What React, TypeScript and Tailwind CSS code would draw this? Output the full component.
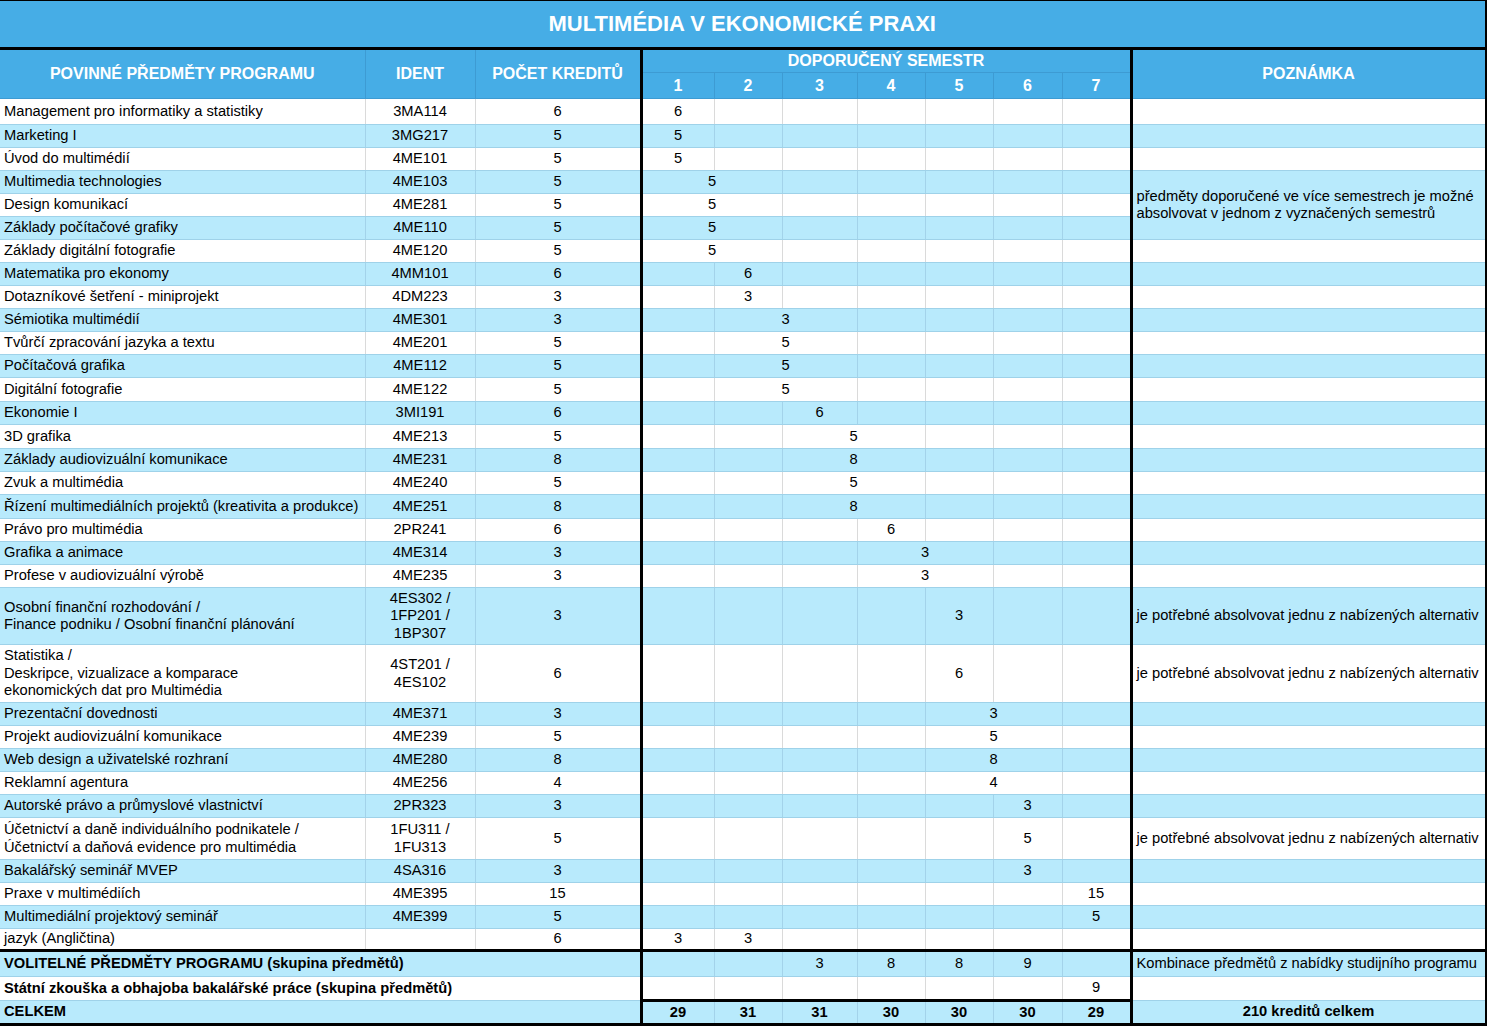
import React from "react";

type Sem = [number, number, string];
type Row = {
  name: string | string[];
  id: string | string[];
  cr: string;
  sem: Sem[];
  h: string;
  note?: string;
};

const ALT = "je potřebné absolvovat jednu z nabízených alternativ";

const rows: Row[] = [
  { name: "Management pro informatiky a statistiky", id: "3MA114", cr: "6", sem: [[1, 1, "6"]], h: "h-[26px]" },
  { name: "Marketing I", id: "3MG217", cr: "5", sem: [[1, 1, "5"]], h: "h-[23px]" },
  { name: "Úvod do multimédií", id: "4ME101", cr: "5", sem: [[1, 1, "5"]], h: "h-[23px]" },
  { name: "Multimedia technologies", id: "4ME103", cr: "5", sem: [[1, 2, "5"]], h: "h-[23px]", note: "SPAN" },
  { name: "Design komunikací", id: "4ME281", cr: "5", sem: [[1, 2, "5"]], h: "h-[23px]", note: "SKIP" },
  { name: "Základy počítačové grafiky", id: "4ME110", cr: "5", sem: [[1, 2, "5"]], h: "h-[23px]", note: "SKIP" },
  { name: "Základy digitální fotografie", id: "4ME120", cr: "5", sem: [[1, 2, "5"]], h: "h-[23px]" },
  { name: "Matematika pro ekonomy", id: "4MM101", cr: "6", sem: [[2, 1, "6"]], h: "h-[23px]" },
  { name: "Dotazníkové šetření - miniprojekt", id: "4DM223", cr: "3", sem: [[2, 1, "3"]], h: "h-[23px]" },
  { name: "Sémiotika multimédií", id: "4ME301", cr: "3", sem: [[2, 2, "3"]], h: "h-[23px]" },
  { name: "Tvůrčí zpracování jazyka a textu", id: "4ME201", cr: "5", sem: [[2, 2, "5"]], h: "h-[23px]" },
  { name: "Počítačová grafika", id: "4ME112", cr: "5", sem: [[2, 2, "5"]], h: "h-[23px]" },
  { name: "Digitální fotografie", id: "4ME122", cr: "5", sem: [[2, 2, "5"]], h: "h-[24px]" },
  { name: "Ekonomie I", id: "3MI191", cr: "6", sem: [[3, 1, "6"]], h: "h-[23px]" },
  { name: "3D grafika", id: "4ME213", cr: "5", sem: [[3, 2, "5"]], h: "h-[24px]" },
  { name: "Základy audiovizuální komunikace", id: "4ME231", cr: "8", sem: [[3, 2, "8"]], h: "h-[23px]" },
  { name: "Zvuk a multimédia", id: "4ME240", cr: "5", sem: [[3, 2, "5"]], h: "h-[23px]" },
  { name: "Řízení multimediálních projektů (kreativita a produkce)", id: "4ME251", cr: "8", sem: [[3, 2, "8"]], h: "h-[24px]" },
  { name: "Právo pro multimédia", id: "2PR241", cr: "6", sem: [[4, 1, "6"]], h: "h-[23px]" },
  { name: "Grafika a animace", id: "4ME314", cr: "3", sem: [[4, 2, "3"]], h: "h-[23px]" },
  { name: "Profese v audiovizuální výrobě", id: "4ME235", cr: "3", sem: [[4, 2, "3"]], h: "h-[23px]" },
  {
    name: ["Osobní finanční rozhodování /", "Finance podniku / Osobní finanční plánování"],
    id: ["4ES302 /", "1FP201 /", "1BP307"],
    cr: "3",
    sem: [[5, 1, "3"]],
    h: "h-[57px]",
    note: ALT,
  },
  {
    name: ["Statistika /", "Deskripce, vizualizace a komparace", "ekonomických dat pro Multimédia"],
    id: ["4ST201 /", "4ES102"],
    cr: "6",
    sem: [[5, 1, "6"]],
    h: "h-[58px]",
    note: ALT,
  },
  { name: "Prezentační dovednosti", id: "4ME371", cr: "3", sem: [[5, 2, "3"]], h: "h-[23px]" },
  { name: "Projekt audiovizuální komunikace", id: "4ME239", cr: "5", sem: [[5, 2, "5"]], h: "h-[23px]" },
  { name: "Web design a uživatelské rozhraní", id: "4ME280", cr: "8", sem: [[5, 2, "8"]], h: "h-[23px]" },
  { name: "Reklamní agentura", id: "4ME256", cr: "4", sem: [[5, 2, "4"]], h: "h-[23px]" },
  { name: "Autorské právo a průmyslové vlastnictví", id: "2PR323", cr: "3", sem: [[6, 1, "3"]], h: "h-[23px]" },
  {
    name: ["Účetnictví a daně individuálního podnikatele /", "Účetnictví a daňová evidence pro multimédia"],
    id: ["1FU311 /", "1FU313"],
    cr: "5",
    sem: [[6, 1, "5"]],
    h: "h-[42px]",
    note: ALT,
  },
  { name: "Bakalářský seminář MVEP", id: "4SA316", cr: "3", sem: [[6, 1, "3"]], h: "h-[23px]" },
  { name: "Praxe v multimédiích", id: "4ME395", cr: "15", sem: [[7, 1, "15"]], h: "h-[23px]" },
  { name: "Multimediální projektový seminář", id: "4ME399", cr: "5", sem: [[7, 1, "5"]], h: "h-[23px]" },
  { name: "jazyk (Angličtina)", id: "", cr: "6", sem: [[1, 1, "3"], [2, 1, "3"]], h: "h-[22px]" },
];

const R_THICK = "border-r-[3px] border-r-black";
const R_WHITE = "border-r border-r-[#dadada]";
const R_BLUE = "border-r border-r-[#a3d3ea]";
const R_HEAD = "border-r border-r-[#3d9bd3]";
const B_LINE = "border-b border-b-[#9fd2e9]";
const B_THICK = "border-b-[3px] border-b-black";
const B_HEAD = "border-b border-b-[#3d9bd3]";
const BLUE_BG = "bg-[#b8eafc]";

function Lines({ v }: { v: string | string[] }) {
  if (Array.isArray(v)) {
    return (
      <>
        {v.map((l, i) => (
          <div key={i}>{l}</div>
        ))}
      </>
    );
  }
  return <>{v}</>;
}

function semCells(sem: Sem[], blue: boolean, bottom: string, bold = false) {
  const out: React.ReactNode[] = [];
  let c = 1;
  while (c <= 7) {
    const s = sem.find((x) => x[0] === c);
    const span = s ? s[1] : 1;
    const end = c + span - 1;
    const right = end === 7 ? R_THICK : blue ? R_BLUE : R_WHITE;
    out.push(
      <td
        key={c}
        colSpan={span}
        className={`${right} ${bottom} p-0 text-center align-middle ${bold ? "font-bold" : ""}`}
      >
        {s ? s[2] : ""}
      </td>
    );
    c += span;
  }
  return out;
}

export default function App() {
  return (
    <div className="bg-white text-black font-['Liberation_Sans',Arial,sans-serif] text-[14.7px] leading-[17.5px]">
      <table className="table-fixed border-collapse w-[1486px] whitespace-nowrap">
        <colgroup>
          <col className="w-[365px]" />
          <col className="w-[110px]" />
          <col className="w-[166px]" />
          <col className="w-[73px]" />
          <col className="w-[68px]" />
          <col className="w-[75px]" />
          <col className="w-[68px]" />
          <col className="w-[68px]" />
          <col className="w-[69px]" />
          <col className="w-[69px]" />
          <col className="w-[355px]" />
        </colgroup>
        <tbody>
          <tr className="h-[48px]">
            <td
              colSpan={11}
              className={`bg-[#46ade6] text-white font-bold text-[22px] text-center align-middle p-0 border-t border-t-black ${B_THICK} ${R_THICK}`}
            >
              MULTIMÉDIA V EKONOMICKÉ PRAXI
            </td>
          </tr>
          <tr className="h-[24px] bg-[#46ade6] text-white font-bold text-[16px]">
            <td rowSpan={2} className={`${R_HEAD} ${B_HEAD} p-0 text-center align-middle`}>
              POVINNÉ PŘEDMĚTY PROGRAMU
            </td>
            <td rowSpan={2} className={`${R_HEAD} ${B_HEAD} p-0 text-center align-middle`}>
              IDENT
            </td>
            <td rowSpan={2} className={`${R_THICK} ${B_HEAD} p-0 text-center align-middle`}>
              POČET KREDITŮ
            </td>
            <td colSpan={7} className={`${R_THICK} ${B_HEAD} p-0 text-center align-middle`}>
              DOPORUČENÝ SEMESTR
            </td>
            <td rowSpan={2} className={`${R_THICK} ${B_HEAD} p-0 text-center align-middle`}>
              POZNÁMKA
            </td>
          </tr>
          <tr className="h-[26px] bg-[#46ade6] text-white font-bold text-[16px]">
            {[1, 2, 3, 4, 5, 6, 7].map((n) => (
              <td key={n} className={`${n === 7 ? R_THICK : R_HEAD} ${B_HEAD} p-0 text-center align-middle`}>
                {n}
              </td>
            ))}
          </tr>
          {rows.map((r, i) => {
            const blue = i % 2 === 1;
            const last = i === rows.length - 1;
            const bottom = last ? B_THICK : B_LINE;
            const rr = blue ? R_BLUE : R_WHITE;
            return (
              <tr key={i} className={`${r.h} ${blue ? BLUE_BG : "bg-white"}`}>
                <td className={`${rr} ${bottom} py-0 pl-[4px] pr-0 text-left align-middle`}>
                  <Lines v={r.name} />
                </td>
                <td className={`${rr} ${bottom} p-0 text-center align-middle`}>
                  <Lines v={r.id} />
                </td>
                <td className={`${R_THICK} ${bottom} p-0 text-center align-middle`}>{r.cr}</td>
                {semCells(r.sem, blue, bottom)}
                {r.note === "SKIP" ? null : r.note === "SPAN" ? (
                  <td
                    rowSpan={3}
                    className={`${R_THICK} ${B_LINE} ${BLUE_BG} py-0 pl-[4px] pr-0 text-left align-middle`}
                  >
                    předměty doporučené ve více semestrech je možné
                    <br />
                    absolvovat v jednom z vyznačených semestrů
                  </td>
                ) : (
                  <td className={`${R_THICK} ${bottom} py-0 pl-[4px] pr-0 text-left align-middle`}>
                    {r.note ?? ""}
                  </td>
                )}
              </tr>
            );
          })}
          <tr className={`h-[26px] ${BLUE_BG}`}>
            <td colSpan={3} className={`${R_THICK} ${B_LINE} py-0 pl-[4px] pr-0 text-left align-middle font-bold`}>
              VOLITELNÉ PŘEDMĚTY PROGRAMU (skupina předmětů)
            </td>
            {semCells(
              [
                [3, 1, "3"],
                [4, 1, "8"],
                [5, 1, "8"],
                [6, 1, "9"],
              ],
              true,
              B_LINE
            )}
            <td className={`${R_THICK} ${B_LINE} py-0 pl-[4px] pr-0 text-left align-middle`}>
              Kombinace předmětů z nabídky studijního programu
            </td>
          </tr>
          <tr className="h-[24px] bg-white">
            <td colSpan={3} className={`${R_THICK} ${B_LINE} py-0 pl-[4px] pr-0 text-left align-middle font-bold`}>
              Státní zkouška a obhajoba bakalářské práce (skupina předmětů)
            </td>
            {semCells([[7, 1, "9"]], false, B_THICK)}
            <td className={`${R_THICK} ${B_LINE} py-0 pl-[4px] pr-0 text-left align-middle`}></td>
          </tr>
          <tr className={`h-[24px] ${BLUE_BG}`}>
            <td colSpan={3} className={`${R_THICK} ${B_THICK} py-0 pl-[4px] pr-0 text-left align-middle font-bold`}>
              CELKEM
            </td>
            {semCells(
              [
                [1, 1, "29"],
                [2, 1, "31"],
                [3, 1, "31"],
                [4, 1, "30"],
                [5, 1, "30"],
                [6, 1, "30"],
                [7, 1, "29"],
              ],
              true,
              B_THICK,
              true
            )}
            <td className={`${R_THICK} ${B_THICK} p-0 text-center align-middle font-bold`}>210 kreditů celkem</td>
          </tr>
        </tbody>
      </table>
    </div>
  );
}
